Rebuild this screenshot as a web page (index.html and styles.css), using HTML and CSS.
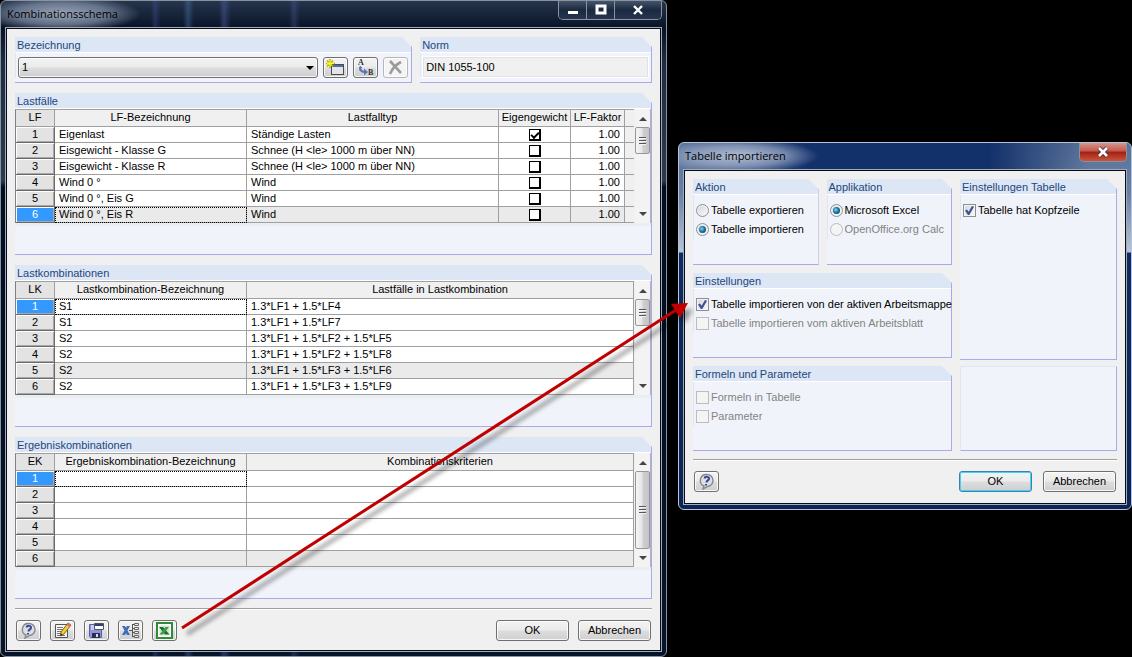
FILE: index.html
```
<!DOCTYPE html>
<html lang="de">
<head>
  <meta charset="UTF-8" />
  <title>Kombinationsschema</title>
  <meta name="viewport" content="width=device-width, initial-scale=1.0" />
  <link rel="stylesheet" href="styles.css">
</head>
<body>
  <main class="desktop">

    <!-- Kombinationsschema -->
    <section class="window main-window">
      <header class="titlebar">
        <h1>Kombinationsschema</h1>
        <div class="caption">
          <button type="button" aria-label="Minimieren"><svg width="12" height="12"><rect x="1" y="7" width="10" height="3" fill="#fff" /></svg></button>
          <button type="button" aria-label="Maximieren"><svg width="12" height="12"><rect x="2" y="2" width="8" height="7" fill="none" stroke="#fff" stroke-width="3" /></svg></button>
          <button type="button" class="wide" aria-label="Schließen"><svg width="12" height="12"><path d="M2 2L10 10M10 2L2 10" stroke="#fff" stroke-width="2.4" /></svg></button>
        </div>
      </header>
      <div class="client">
        <div class="top-row">
          <section class="group grow">
            <h2><label for="scheme">Bezeichnung</label></h2>
            <div class="group-body tools">
              <div class="select-wrap">
                <select id="scheme"><option>1</option></select>
              </div>
              <button type="button" class="icon-btn" aria-label="Neu">
                <svg width="19" height="17" viewBox="0 0 19 17">
                  <rect x="5.500" y="5.500" width="12" height="10" fill="#e4e4ea" stroke="#4a4a52" />
                  <rect x="6" y="6" width="11" height="2" fill="#4d6fa8" />
                  <path d="M4 0v9M0 4.500h9M1 1.500l6 6M7 1.500l-6 6" stroke="#b3a400" stroke-width="1.600" />
                  <path d="M4 1v7M1 4.500h7M2 2.500l4 4M6 2.500l-4 4" stroke="#ffff30" />
                </svg>
              </button>
              <button type="button" class="icon-btn" aria-label="Umbenennen">
                <svg width="19" height="17" viewBox="0 0 19 17">
                  <text x="2" y="6" class="ab">A</text>
                  <text x="12" y="16" class="ab">B</text>
                  <path d="M5 7.500c-2 3 0 5.500 4 5.500" fill="none" stroke="#5b78b4" stroke-width="2.400" />
                  <path d="M8 9.500l4 3.500-4 3.500z" fill="#5b78b4" />
                </svg>
              </button>
              <button type="button" class="icon-btn" aria-label="Löschen" disabled>
                <svg width="17" height="17" viewBox="0 0 17 17">
                  <path d="M3 2c3 3 7 8 11 12M14 3C10 5 5 10 3 15" fill="none" stroke="#9b9b9b" stroke-width="2.600" />
                </svg>
              </button>
            </div>
          </section>
          <section class="group norm">
            <h2><label for="norm">Norm</label></h2>
            <div class="group-body tools">
              <input id="norm" type="text" value="DIN 1055-100" readonly>
            </div>
          </section>
        </div>

        <section class="group table-group">
          <h2>Lastfälle</h2>
          <div class="grid-row">
            <table class="open">
              <colgroup>
                <col class="c-num"><col class="c-name"><col><col class="c-own"><col class="c-factor"><col class="c-fill">
              </colgroup>
              <thead>
                <tr><th>LF</th><th>LF-Bezeichnung</th><th>Lastfalltyp</th><th>Eigengewicht</th><th>LF-Faktor</th><th></th></tr>
              </thead>
              <tbody>
                <tr><th>1</th><td>Eigenlast</td><td>Ständige Lasten</td><td class="mid"><input type="checkbox" aria-label="Eigengewicht LF 1" checked></td><td class="num">1.00</td><td class="fill"></td></tr>
                <tr><th>2</th><td>Eisgewicht - Klasse G</td><td>Schnee (H &lt;le&gt; 1000 m über NN)</td><td class="mid"><input type="checkbox" aria-label="Eigengewicht LF 2"></td><td class="num">1.00</td><td class="fill"></td></tr>
                <tr><th>3</th><td>Eisgewicht - Klasse R</td><td>Schnee (H &lt;le&gt; 1000 m über NN)</td><td class="mid"><input type="checkbox" aria-label="Eigengewicht LF 3"></td><td class="num">1.00</td><td class="fill"></td></tr>
                <tr><th>4</th><td>Wind 0 °</td><td>Wind</td><td class="mid"><input type="checkbox" aria-label="Eigengewicht LF 4"></td><td class="num">1.00</td><td class="fill"></td></tr>
                <tr><th>5</th><td>Wind 0 °, Eis G</td><td>Wind</td><td class="mid"><input type="checkbox" aria-label="Eigengewicht LF 5"></td><td class="num">1.00</td><td class="fill"></td></tr>
                <tr class="shade"><th class="active">6</th><td class="focus">Wind 0 °, Eis R</td><td>Wind</td><td class="mid"><input type="checkbox" aria-label="Eigengewicht LF 6"></td><td class="num">1.00</td><td class="fill"></td></tr>
              </tbody>
            </table>
            <div class="scrollbar"><i class="up"></i><span class="thumb"></span><i class="down"></i></div>
          </div>
        </section>

        <section class="group table-group">
          <h2>Lastkombinationen</h2>
          <div class="grid-row">
            <table>
              <colgroup><col class="c-num"><col class="c-name"><col></colgroup>
              <thead>
                <tr><th>LK</th><th>Lastkombination-Bezeichnung</th><th>Lastfälle in Lastkombination</th></tr>
              </thead>
              <tbody>
                <tr><th class="active">1</th><td class="focus">S1</td><td>1.3*LF1 + 1.5*LF4</td></tr>
                <tr><th>2</th><td>S1</td><td>1.3*LF1 + 1.5*LF7</td></tr>
                <tr><th>3</th><td>S2</td><td>1.3*LF1 + 1.5*LF2 + 1.5*LF5</td></tr>
                <tr><th>4</th><td>S2</td><td>1.3*LF1 + 1.5*LF2 + 1.5*LF8</td></tr>
                <tr class="shade"><th>5</th><td>S2</td><td>1.3*LF1 + 1.5*LF3 + 1.5*LF6</td></tr>
                <tr><th>6</th><td>S2</td><td>1.3*LF1 + 1.5*LF3 + 1.5*LF9</td></tr>
              </tbody>
            </table>
            <div class="scrollbar"><i class="up"></i><span class="thumb"></span><i class="down"></i></div>
          </div>
        </section>

        <section class="group table-group">
          <h2>Ergebniskombinationen</h2>
          <div class="grid-row">
            <table>
              <colgroup><col class="c-num"><col class="c-name"><col></colgroup>
              <thead>
                <tr><th>EK</th><th>Ergebniskombination-Bezeichnung</th><th>Kombinationskriterien</th></tr>
              </thead>
              <tbody>
                <tr><th class="active">1</th><td class="focus"></td><td></td></tr>
                <tr><th>2</th><td></td><td></td></tr>
                <tr><th>3</th><td></td><td></td></tr>
                <tr><th>4</th><td></td><td></td></tr>
                <tr><th>5</th><td></td><td></td></tr>
                <tr class="shade"><th>6</th><td></td><td></td></tr>
              </tbody>
            </table>
            <div class="scrollbar"><i class="up"></i><span class="thumb tall"></span><i class="down"></i></div>
          </div>
        </section>

        <footer class="actions">
          <button type="button" class="icon-btn" aria-label="Hilfe">
            <svg width="17" height="17" viewBox="0 0 17 17">
              <path d="M8.500 1.500a6 6 0 0 1 1 12L5 16l1-3A6 6 0 0 1 8.500 1.500z" fill="#dcdfe8" stroke="#85878f" stroke-width="1.400" />
              <path d="M6.500 5.500c.5-2.500 5-2 4.500.5-.3 1.500-2.500 1.500-2.500 3.500M8 11v1.500" fill="none" stroke="#3b4a8c" stroke-width="2" />
            </svg>
          </button>
          <button type="button" class="icon-btn" aria-label="Bearbeiten">
            <svg width="19" height="17" viewBox="0 0 19 17">
              <path d="M2.500 2.500h12v13h-12z" fill="#f4f4f4" stroke="#555" />
              <path d="M4 5.500h6M4 7.500h6M4 9.500h4M4 11.500h4M4 13.500h8" stroke="#777" />
              <path d="M15 1l3 2-7 9-3.500 2 .5-4z" fill="#f2cf2e" stroke="#5b4a10" stroke-width=".8" />
              <path d="M15 1l3 2-1.500 2-3-2z" fill="#e06a6a" />
              <path d="M7.500 14l.4-2.500 1.600 1.200z" fill="#222" />
            </svg>
          </button>
          <button type="button" class="icon-btn" aria-label="Speichern">
            <svg width="19" height="17" viewBox="0 0 19 17">
              <path d="M2.500 2.500h12v13h-11l-1-1z" fill="#8f93dc" stroke="#5b5fa0" />
              <path d="M5 11h8v5H5z" fill="#2d2d50" /><path d="M9 12h2v3H9z" fill="#d8daf5" />
              <path d="M4 3h3v5H4z" fill="#c9cbf4" />
              <path d="M7.500 1.500h9v6h-9z" fill="#fff" stroke="#555" /><path d="M8 2h8v2H8z" fill="#33407a" />
            </svg>
          </button>
          <button type="button" class="icon-btn" aria-label="Schema">
            <svg width="19" height="17" viewBox="0 0 19 17">
              <path d="M1 4h3l5 9H6zM6 4h3l-5 9H1z" fill="#3f6db8" />
              <path d="M8 8.500h3M11.500 2v13M11.500 2.500h2M11.500 6.500h2M11.500 10.500h2M11.500 14.500h2" stroke="#555" fill="none" />
              <path d="M13.500 1.500h4v2h-4zM13.500 5.500h4v2h-4zM13.500 9.500h4v2h-4zM13.500 13.500h4v2h-4z" fill="#eee" stroke="#666" />
            </svg>
          </button>
          <button type="button" class="icon-btn" aria-label="Excel">
            <svg width="17" height="17" viewBox="0 0 17 17">
              <rect x="1" y="1" width="15" height="15" fill="#fff" stroke="#2f8a3a" stroke-width="2" />
              <rect x="3.500" y="3.500" width="10" height="10" fill="#cfe6cf" />
              <path d="M3 5h4l6.500 7.500H9z" fill="#1e6e2a" /><path d="M13 5H9.500L3.500 12.500H7z" fill="#3f9a4a" />
            </svg>
          </button>
          <span class="spacer"></span>
          <button type="button" class="btn">OK</button>
          <button type="button" class="btn">Abbrechen</button>
        </footer>
      </div>
    </section>

    <!-- Tabelle importieren -->
    <section class="window dialog">
      <header class="titlebar">
        <h1>Tabelle importieren</h1>
        <div class="caption">
          <button type="button" class="wide close" aria-label="Schließen"><svg width="14" height="12"><path d="M3 2L11 10M11 2L3 10" stroke="#4a3038" stroke-width="4.400" /><path d="M3 2L11 10M11 2L3 10" stroke="#fff" stroke-width="2.600" /></svg></button>
        </div>
      </header>
      <div class="client">
        <div class="panels">
          <div class="panel-col">
            <div class="pair">
              <section class="group">
                <h2>Aktion</h2>
                <div class="group-body options">
                  <label><input type="radio" name="action">Tabelle exportieren</label>
                  <label><input type="radio" name="action" checked>Tabelle importieren</label>
                </div>
              </section>
              <section class="group">
                <h2>Applikation</h2>
                <div class="group-body options">
                  <label><input type="radio" name="app" checked>Microsoft Excel</label>
                  <label class="off"><input type="radio" name="app" disabled>OpenOffice.org Calc</label>
                </div>
              </section>
            </div>
            <section class="group">
              <h2>Einstellungen</h2>
              <div class="group-body options">
                <label><input type="checkbox" checked>Tabelle importieren von der aktiven Arbeitsmappe</label>
                <label class="off"><input type="checkbox" disabled>Tabelle importieren vom aktiven Arbeitsblatt</label>
              </div>
            </section>
            <section class="group">
              <h2>Formeln und Parameter</h2>
              <div class="group-body options">
                <label class="off"><input type="checkbox" disabled>Formeln in Tabelle</label>
                <label class="off"><input type="checkbox" disabled>Parameter</label>
              </div>
            </section>
          </div>
          <div class="panel-col side">
            <section class="group grow">
              <h2>Einstellungen Tabelle</h2>
              <div class="group-body options">
                <label><input type="checkbox" checked>Tabelle hat Kopfzeile</label>
              </div>
            </section>
            <div class="blank"></div>
          </div>
        </div>
        <footer class="actions">
          <button type="button" class="icon-btn" aria-label="Hilfe">
            <svg width="17" height="17" viewBox="0 0 17 17">
              <path d="M8.500 1.500a6 6 0 0 1 1 12L5 16l1-3A6 6 0 0 1 8.500 1.500z" fill="#dcdfe8" stroke="#85878f" stroke-width="1.400" />
              <path d="M6.500 5.500c.5-2.500 5-2 4.500.5-.3 1.500-2.500 1.500-2.500 3.500M8 11v1.500" fill="none" stroke="#3b4a8c" stroke-width="2" />
            </svg>
          </button>
          <span class="spacer"></span>
          <button type="button" class="btn default">OK</button>
          <button type="button" class="btn">Abbrechen</button>
        </footer>
      </div>
    </section>

    <!-- arrow from the Excel button to the import option -->
    <svg class="arrow" viewBox="0 0 1132 657" aria-hidden="true">
      <g class="arrow-shadow">
        <path d="M182 628L676 310" stroke="#000" stroke-width="4" />
        <path d="M688 303L672 304L681 317z" />
      </g>
      <path d="M182 628L676 310" stroke="#c00000" stroke-width="3" />
      <path d="M688 303L671 304L680 318z" fill="#c00000" />
    </svg>
  </main>
</body>
</html>
```
FILE: styles.css
```
* {
  box-sizing: border-box;
}
body {
  margin: 0;
  background: #000;
  color: #000;
  font-family: "Liberation Sans", Arial, sans-serif;
  font-size: 11px;
  line-height: 15px;
  white-space: nowrap;
}
button, input, select {
  font: inherit;
  color: inherit;
  margin: 0;
}
.desktop {
  position: relative;
  display: grid;
  grid-template-columns: 667fr 454fr;
  column-gap: 11px;
  align-items: start;
}

/* window frames */
.window {
  border: 1px solid #8a949f;
  border-radius: 6px;
  padding: 0 4px 4px;
  min-width: 0;
}
.main-window {
  background:
    radial-gradient(ellipse 80px 18px at 60px 13px, rgba(175, 186, 204, 0.85), rgba(150, 164, 188, 0.6) 60%, transparent),
    linear-gradient(90deg, transparent 150px, rgba(80, 95, 180, 0.3) 154px, transparent 160px, transparent 182px, rgba(100, 150, 220, 0.3) 187px, transparent 193px, transparent 218px, rgba(90, 105, 180, 0.4) 223px, transparent 230px, transparent 288px, rgba(90, 105, 170, 0.3) 293px, transparent 299px),
    linear-gradient(#26354d, #071226 28px, #1d2c42 60px, #2b3a4e 180px, #020d22 186px, #061329);
}
.dialog {
  margin-top: 142px;
  border-color: #b4c4dc;
  background:
    radial-gradient(ellipse 80px 17px at 60px 13px, rgba(190, 200, 220, 0.9), rgba(170, 182, 208, 0.6) 60%, transparent),
    linear-gradient(90deg, transparent 10px, #12306a 130px, #12306a 310px, transparent 410px) 0 0 / 100% 27px no-repeat,
    linear-gradient(#5a7299, #6880a4 50px, #b9c5d6 109px, #0e2c60 110px, #0c2454);
}
.titlebar {
  display: flex;
  justify-content: space-between;
  align-items: flex-start;
  height: 26px;
}
h1 {
  margin: 4px 0 0 2px;
  font: 11px/18px "Open Sans", "Noto Sans", sans-serif;
}
.caption {
  display: flex;
  border: 1px solid #8993a0;
  border-top: 0;
  border-radius: 0 0 5px 5px;
  overflow: hidden;
}
.caption button {
  display: grid;
  place-items: center;
  width: 28px;
  height: 18px;
  padding: 0;
  border: 0;
  border-right: 1px solid #8993a0;
  background: linear-gradient(#45546a, #1b2940 50%, #263650);
}
.caption .wide {
  width: 46px;
  border-right: 0;
}
.caption .close {
  background: linear-gradient(#d9958a, #c0594c 45%, #a51f12 50%, #c8553c);
}
.client {
  border: 1px solid #050b18;
  outline: 1px solid #a2acb8;
  margin: 1px;
  padding: 8px;
  background: #f0f0f0;
}

/* groups */
.group {
  min-width: 0;
  border-right: 1px solid #a9a9ee;
  border-bottom: 1px solid #a9a9ee;
  background: #f0f4fa;
  clip-path: polygon(0 0, calc(100% - 10px) 0, 100% 10px, 100% 100%, 0 100%);
}
.table-group {
  min-height: 162px;
  margin-top: 10px;
}
h2 {
  margin: 0;
  padding: 1px 0 0 2px;
  border-bottom: 1px solid #fff;
  background: #dce6f5;
  color: #1c477c;
  font-size: 11px;
  font-weight: normal;
  line-height: 14px;
}
.group-body {
  border-left: 1px solid #dce6f5;
}
.top-row {
  display: flex;
  gap: 8px;
}
.top-row .group {
  height: 46px;
}
.grow {
  flex: 1;
}
.norm {
  width: 36.4%;
}
.norm input {
  width: 100%;
  height: 20px;
  padding: 0 2px;
  border: 1px solid #dfe3e8;
  outline: 1px solid #fff;
  background: #f0f0f0;
}
.tools {
  display: flex;
  gap: 5px;
  padding: 4px 3px 0 2px;
}
.select-wrap {
  position: relative;
  flex: 1;
}
.select-wrap::after {
  content: "";
  position: absolute;
  right: 4px;
  top: 9px;
  border: 4px solid transparent;
  border-top-color: #000;
  border-bottom: 0;
  pointer-events: none;
}
.select-wrap select {
  width: 100%;
  height: 21px;
  padding: 0 3px;
}
.select-wrap select, .icon-btn, .btn {
  appearance: none;
  border: 1px solid #707070;
  border-radius: 3px;
  background: linear-gradient(#f3f3f3, #ebebeb 48%, #dddddd 52%, #cfcfcf);
  box-shadow: inset 0 0 0 1px rgba(255, 255, 255, 0.8);
}
.icon-btn {
  display: grid;
  place-items: center;
  width: 25px;
  height: 21px;
  padding: 0;
}
.icon-btn:disabled {
  border-color: #b5b8bb;
  background: #f4f4f4;
}
.ab {
  font: bold 8px "Liberation Serif", serif;
  fill: #333;
}

/* tables */
.grid-row {
  display: flex;
  gap: 1px;
  padding-bottom: 3px;
  background: linear-gradient(#e9eef0, #e9eef0) bottom / 100% 3px no-repeat, #f0f0f0;
}
table {
  flex: 1;
  width: 100%;
  min-width: 0;
  table-layout: fixed;
  border-spacing: 0;
  border-top: 1px solid #a0a0a0;
  border-left: 1px solid #808080;
}
.c-num { width: 39px; }
.c-name { width: 192px; }
.c-own { width: 72px; }
.c-factor { width: 54px; }
.c-fill { width: 9px; }
th, td {
  height: 16px;
  padding: 0 4px;
  border-right: 1px solid #a0a0a0;
  border-bottom: 1px solid #a0a0a0;
  background: #fff;
  font-weight: normal;
  line-height: 15px;
  text-align: left;
  overflow: hidden;
}
thead th {
  height: 17px;
  padding: 0;
  background: #f0f0f0;
  text-align: center;
  vertical-align: top;
}
thead th:first-child,
tbody th {
  padding: 0;
  background: #e3e3e3;
  text-align: center;
}
tbody th {
  border-color: #696969;
  box-shadow: inset 1px 1px #fff, inset -1px -1px #a8a8a8;
}
tbody th.active {
  background: #3399ff;
  color: #fff;
}
.shade td {
  background: #eaeaea;
}
td.focus {
  outline: 1px dotted #000;
  outline-offset: -1px;
}
td.mid {
  padding: 0;
  text-align: center;
}
td.num {
  text-align: right;
}
td.fill {
  padding: 0;
  background: #f0f0f0;
}
.open th:last-child,
.open td:last-child {
  border-right: 0;
}
td input {
  appearance: none;
  display: block;
  width: 12px;
  height: 12px;
  margin: 1px auto 0;
  border: 1px solid #000;
  border-width: 1px 2px 2px 1px;
  background: #fff;
}
td input:checked::after {
  content: "";
  display: block;
  width: 6px;
  height: 3px;
  margin: 2px 0 0 1px;
  border: solid #000;
  border-width: 0 0 2px 2px;
  transform: rotate(-45deg);
}

/* scrollbars */
.scrollbar {
  display: flex;
  flex: none;
  flex-direction: column;
  width: 16px;
  padding: 8px 0 7px;
  border-right: 1px solid #b4b4b4;
  background: #f3f3f3;
}
.scrollbar i {
  align-self: center;
  border: 4px solid transparent;
}
.scrollbar .up {
  border-top: 0;
  border-bottom-color: #444;
}
.scrollbar .down {
  border-bottom: 0;
  border-top-color: #444;
  margin-top: auto;
}
.thumb {
  display: grid;
  place-items: center;
  height: 27px;
  margin-top: 6px;
  border: 1px solid #979797;
  border-radius: 2px;
  background: linear-gradient(90deg, #f5f5f5, #e6e6e6 45%, #cfcfd2 55%, #c4c4c8);
}
.thumb::after {
  content: "";
  width: 7px;
  height: 8px;
  background: repeating-linear-gradient(#555 0 1px, #f5f5f5 1px 2px, transparent 2px 3px);
}
.thumb.tall {
  height: 78px;
}

/* button rows */
.actions {
  display: flex;
  gap: 9px;
  margin-top: 9px;
  padding: 11px 1px 1px;
  border-top: 1px solid #a0a0a0;
  box-shadow: inset 0 1px #fff;
}
.spacer {
  flex: 1;
}
.btn {
  width: 73px;
  height: 21px;
  padding: 0;
}
.btn.default {
  border-color: #3c7fb1;
  box-shadow: inset 0 0 0 1px #46d2f6;
}
.dialog .actions {
  gap: 11px;
  margin-top: 8px;
  padding-bottom: 3px;
}

/* import dialog */
.panels {
  display: flex;
  gap: 8px;
}
.panel-col {
  display: flex;
  flex-direction: column;
  gap: 8px;
  flex: 259;
  min-width: 0;
}
.panel-col.side {
  flex: 157;
  gap: 6px;
}
.panel-col .group {
  min-height: 85px;
}
.pair {
  display: flex;
  gap: 8px;
}
.pair .group {
  flex: 1;
  min-height: 86px;
}
.blank {
  height: 85px;
  border: 1px solid #a9a9ee;
  border-top-color: #dce6f5;
  border-left-color: #dce6f5;
  background: #f0f4fa;
}
.options {
  padding: 6px 0 0 2px;
}
.options label {
  display: flex;
  align-items: center;
  gap: 2px;
  height: 19px;
}
.options .off {
  color: #838383;
}
.options input {
  appearance: none;
  display: grid;
  place-items: center;
  width: 13px;
  height: 13px;
  flex: none;
  border: 1px solid #8e8f8f;
  background: linear-gradient(135deg, #d2d5da, #fafafa);
  box-shadow: inset 0 0 0 1px #f4f4f4;
}
.options input[type="radio"] {
  border-radius: 50%;
}
.options input:disabled {
  border-color: #bcbcbc;
  background: #f4f4f4;
}
.options input[type="radio"]:checked::after {
  content: "";
  width: 7px;
  height: 7px;
  border-radius: 50%;
  background: radial-gradient(circle at 40% 40%, #7fd8f5, #1a78a8 45%, #0b2c4c);
}
.options input[type="checkbox"]:checked::after {
  content: "";
  width: 9px;
  height: 9px;
  background: #3b5296;
  clip-path: polygon(0 50%, 22% 40%, 40% 65%, 78% 0, 100% 8%, 48% 100%, 32% 100%);
}

.arrow {
  position: absolute;
  top: 0;
  left: 0;
  width: 100%;
  pointer-events: none;
}
.arrow-shadow {
  opacity: 0.35;
  transform: translate(5px, 6px);
  filter: blur(2px);
}
```
